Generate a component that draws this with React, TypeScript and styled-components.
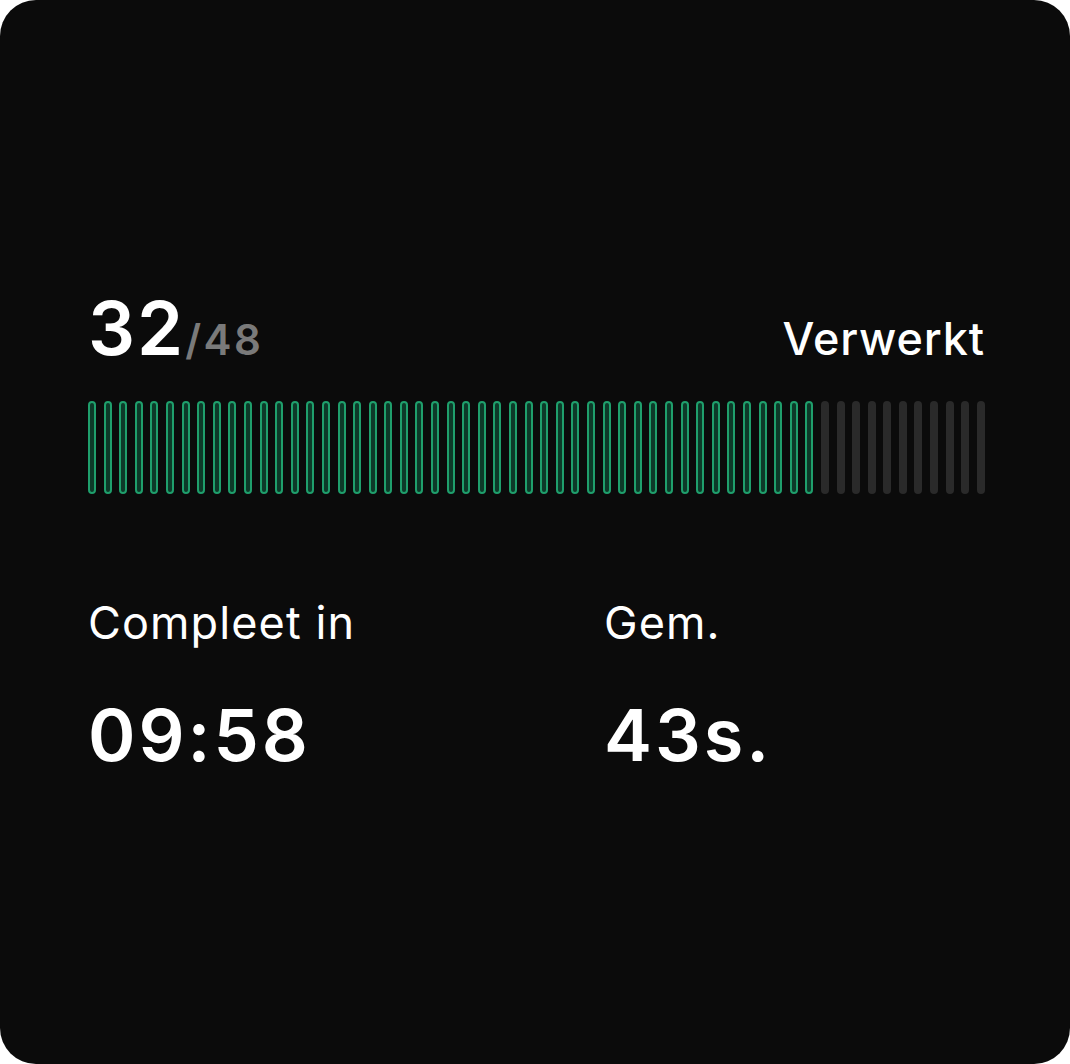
import styled, { createGlobalStyle } from 'styled-components'

const GlobalStyle = createGlobalStyle`
  html, body {
    margin: 0;
    padding: 0;
    background: #ffffff;
  }
  body {
    font-family: Inter, "Noto Sans", "Liberation Sans", sans-serif;
    -webkit-font-smoothing: antialiased;
  }
`

const TOTAL_BARS = 58
const FILLED_BARS = 47

export default function App() {
  const bars = Array.from({ length: TOTAL_BARS }, (_, i) => i < FILLED_BARS)

  return (
    <>
      <GlobalStyle />
      <Card>
        <Header>
          <Count>
            32<Total>/48</Total>
          </Count>
          <HeaderLabel>Verwerkt</HeaderLabel>
        </Header>

        <BarRow>
          {bars.map((done, i) => (
            <Bar key={i} $done={done} />
          ))}
        </BarRow>

        <Stats>
          <Stat>
            <StatLabel>Compleet in</StatLabel>
            <StatValue>09:58</StatValue>
          </Stat>
          <Stat>
            <StatLabel>Gem.</StatLabel>
            <StatValue>43s.</StatValue>
          </Stat>
        </Stats>
      </Card>
    </>
  )
}

const Card = styled.div`
  box-sizing: border-box;
  width: 1070px;
  height: 1064px;
  border-radius: 36px;
  background: #0b0b0b;
  color: #ffffff;
  padding: 0 85px 2px 88px;
  display: flex;
  flex-direction: column;
  justify-content: center;
`

const Header = styled.div`
  display: flex;
  justify-content: space-between;
  align-items: baseline;
`

const Count = styled.div`
  font-size: 74px;
  font-weight: 600;
  line-height: 1;
  letter-spacing: 2px;
`

const Total = styled.span`
  font-size: 42px;
  font-weight: 600;
  color: #7a7a7a;
  letter-spacing: 2.5px;
`

const HeaderLabel = styled.div`
  font-size: 45px;
  font-weight: 500;
  line-height: 1;
  letter-spacing: 0.9px;
`

const BarRow = styled.div`
  margin-top: 36px;
  height: 93px;
  display: flex;
  justify-content: space-between;
`

const Bar = styled.div<{ $done: boolean }>`
  box-sizing: border-box;
  width: 8px;
  height: 100%;
  border-radius: 4px;
  background: ${p => (p.$done ? '#0d3a29' : '#2a2a2a')};
  border: ${p => (p.$done ? '2px solid #1f9f6c' : 'none')};
`

const Stats = styled.div`
  margin-top: 106px;
  display: grid;
  grid-template-columns: 516px 1fr;
`

const Stat = styled.div`
  display: flex;
  flex-direction: column;
  gap: 54px;
`

const StatLabel = styled.div`
  font-size: 45px;
  font-weight: 400;
  line-height: 1;
  letter-spacing: 1.1px;
`

const StatValue = styled.div`
  font-size: 72px;
  font-weight: 600;
  line-height: 1;
  letter-spacing: 3px;
`
